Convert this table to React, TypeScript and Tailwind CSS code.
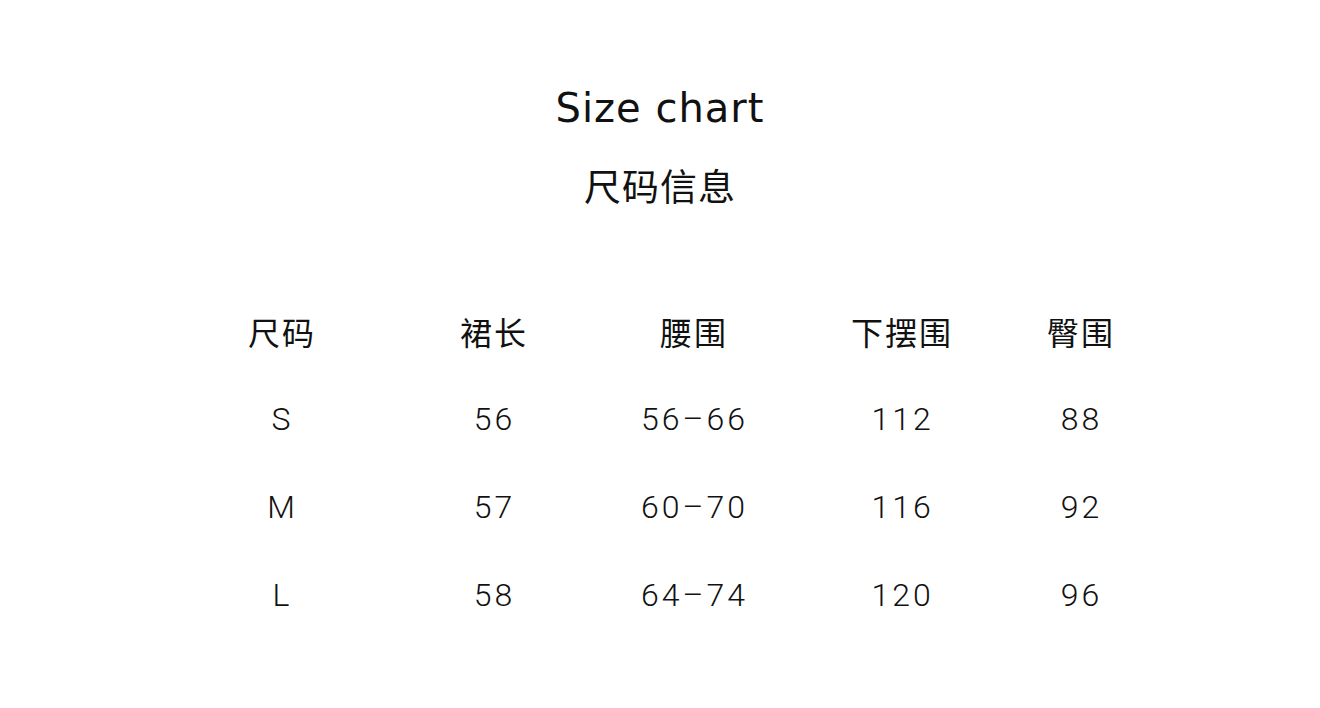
const headers = ["尺码", "裙长", "腰围", "下摆围", "臀围"];

const rows = [
  ["S", "56", "56–66", "112", "88"],
  ["M", "57", "60–70", "116", "92"],
  ["L", "58", "64–74", "120", "96"],
];

// column widths picked so each column's centre sits where the chart's does
const cols = "grid-cols-[216px_208px_192px_224px_134px]";

export default function App() {
  return (
    <div className="min-h-[708px] w-full bg-white pt-[84px] text-[#111]">
      <h1 className="text-center font-['DejaVu_Sans',sans-serif] text-[40px] font-normal leading-[48px] tracking-[1px]">
        Size chart
      </h1>
      <p className="mt-[30px] text-center font-['Noto_Sans_CJK_SC',sans-serif] text-[37px] leading-[46px] tracking-[1px]">
        尺码信息
      </p>

      <div className="ml-[173px] mt-[79px] w-[974px]">
        <div className={`grid h-[88px] items-center ${cols}`}>
          {headers.map((h) => (
            <div
              key={h}
              className="pl-[2px] text-center font-['Noto_Sans_CJK_SC',sans-serif] text-[32px] leading-none tracking-[2px] text-[#111]"
            >
              {h}
            </div>
          ))}
        </div>
        {rows.map((r) => (
          <div key={r[0]} className={`grid h-[88px] items-center ${cols}`}>
            {r.map((v, i) => (
              <div
                key={i}
                className="pl-[3px] text-center font-['Roboto',sans-serif] text-[32px] font-light leading-none tracking-[3px] text-[#111]"
              >
                {v}
              </div>
            ))}
          </div>
        ))}
      </div>
    </div>
  );
}
